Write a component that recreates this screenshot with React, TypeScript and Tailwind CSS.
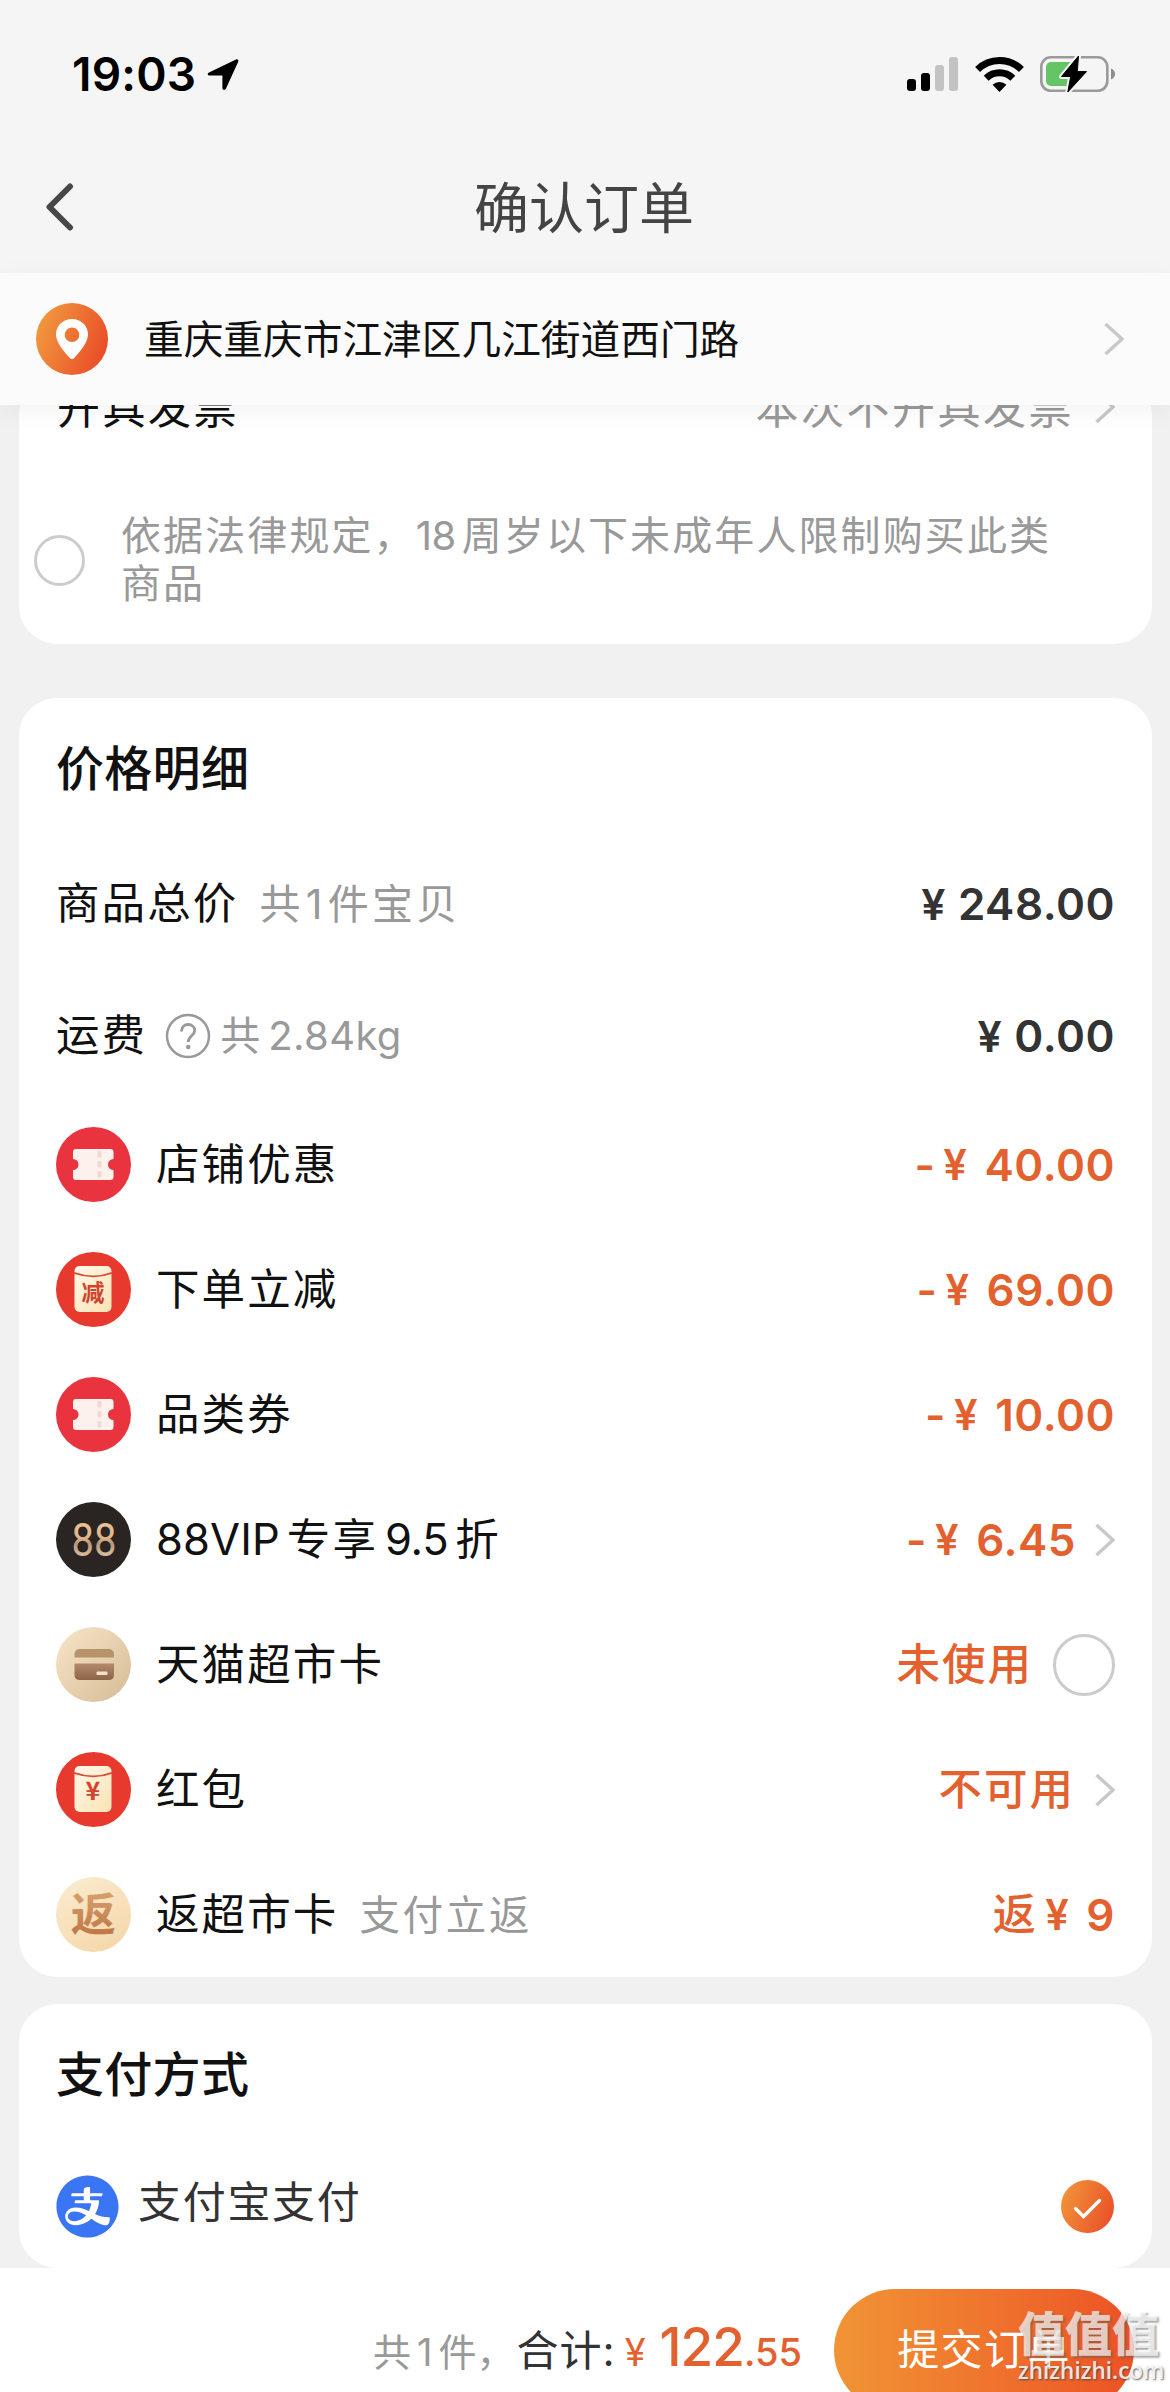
import React from "react";
import { AiFillAlipayCircle } from "react-icons/ai";

const FONT = "font-['Inter','Noto_Sans_CJK_SC',sans-serif]";

function StatusBar() {
  return (
    <div className="flex h-[148px] shrink-0 items-center pl-[72px] pr-[54px]">
      <span className="text-[46px] font-semibold leading-none tracking-[0.200px] text-black">19:03</span>
      <svg className="ml-[11px]" width="32" height="33" viewBox="0 0 32 33">
        <path d="M2 14.5 29 1.5c1.6-.7 2.9.6 2.2 2.2L19 30.500c-.9 2-3.600 1.500-3.600-.6V17.500H2.900C.5 17.500 0 15.400 2 14.500Z" fill="#000" />
      </svg>
      <div className="ml-auto flex items-end gap-[5px]">
        <div className="h-3 w-[9px] rounded-[3px] bg-black" />
        <div className="h-[18px] w-[9px] rounded-[3px] bg-black" />
        <div className="h-[26px] w-[9px] rounded-[3px] bg-[#c3c3c3]" />
        <div className="h-[34px] w-[9px] rounded-[3px] bg-[#c3c3c3]" />
      </div>
      <svg className="ml-[17px]" width="49" height="36" viewBox="0 0 49 36">
        <g fill="none" stroke="#000" strokeWidth="7">
          <path d="M2.600 13.500a31 31 0 0 1 43.800 0" />
          <path d="M11.200 22.200a19 19 0 0 1 26.600 0" />
        </g>
        <path d="M24.500 36 17.600 28.800a10 10 0 0 1 13.800 0Z" fill="#000" />
      </svg>
      <svg className="ml-[16px]" width="76" height="38" viewBox="0 0 76 38">
        <rect x="1.300" y="2.300" width="66" height="33.500" rx="9.500" fill="none" stroke="#9a9a9a" strokeWidth="2.600" />
        <path d="M71 13.500c5.500 2.500 5.500 8.500 0 11Z" fill="#8e8e8e" />
        <rect x="6" y="7" width="30" height="24" rx="5" fill="#65c466" />
        <path d="M38.500 1 21.500 21.500h9.200L27.800 37 46.500 16.600h-9.200Z" fill="#000" stroke="#f5f5f5" strokeWidth="5" strokeLinejoin="round" />
        <path d="M38.500 1 21.500 21.500h9.200L27.800 37 46.500 16.600h-9.200Z" fill="#000" stroke="#000" strokeWidth="1" strokeLinejoin="round" />
      </svg>
    </div>
  );
}

function Chevron({ className = "" }: { className?: string }) {
  return (
    <svg className={`shrink-0 ${className}`} width="20" height="34" viewBox="0 0 20 34">
      <path d="M1.500 2 18 17 1.500 32" fill="none" stroke="#c8c8c8" strokeWidth="3.400" />
    </svg>
  );
}

function NavBar() {
  return (
    <div className="relative flex h-[125px] shrink-0 items-center justify-center pb-[5px]">
      <svg className="absolute left-[45px] top-[35px]" width="30" height="48" viewBox="0 0 30 48">
        <path d="M25 3.500 4.500 24 25 44.500" fill="none" stroke="#474747" strokeWidth="6" strokeLinecap="round" strokeLinejoin="round" />
      </svg>
      <h1 className="pr-[2px] text-[55px] font-normal leading-none text-[#444]">确认订单</h1>
    </div>
  );
}

function AddressBar() {
  return (
    <div className="relative z-10 flex h-[132px] shrink-0 items-center bg-[#fbfbfb] pl-9 pr-[46px] shadow-[0_6px_24px_rgba(0,0,0,0.05)]">
      <svg width="72" height="72" viewBox="0 0 72 72">
        <defs>
          <linearGradient id="pin" x1="0" x2="1" y1="0.300" y2="0.700">
            <stop offset="0" stopColor="#f09a3e" />
            <stop offset="1" stopColor="#ea4a28" />
          </linearGradient>
        </defs>
        <circle cx="36" cy="36" r="36" fill="url(#pin)" />
        <path fillRule="evenodd" d="M36 16c9.200 0 16 6.900 16 15.500 0 7.500-7 16-13.800 23.600a2.900 2.900 0 0 1-4.400 0C27 47.500 20 39 20 31.500 20 22.900 26.800 16 36 16Zm0 8.500a7.300 7.300 0 1 0 0 14.600 7.300 7.300 0 0 0 0-14.600Z" fill="#fff" />
      </svg>
      <span className="ml-[36px] pt-[3px] text-[39.700px] leading-none text-[#111]">重庆重庆市江津区几江街道西门路</span>
      <Chevron className="ml-auto" />
    </div>
  );
}

function InvoiceCard() {
  return (
    <section className="-mt-7 ml-[19px] mr-[18px] h-[267px] shrink-0 overflow-hidden rounded-[38px] bg-white">
      <div className="flex h-[60px] items-center pl-[38px] pr-[37px] text-[43px] leading-none tracking-[2.500px]">
        <span className="pt-[3px] text-[#111]">开具发票</span>
        <span className="ml-auto pt-[3px] text-[#999]">本次不开具发票</span>
        <Chevron className="ml-[21px]" />
      </div>
      <div className="flex h-[207px] items-center pl-[15px] pt-[39px]">
        <div className="size-[51px] shrink-0 rounded-full border-3 border-[#ccc]" />
        <p className="ml-[36px] text-[40px] leading-[48px] tracking-[2.100px] text-[#999]">
          依据法律规定，<span className="mr-[6px] tracking-[-0.500px]">18</span>周岁以下未成年人限制购买此类
          <br />
          商品
        </p>
      </div>
    </section>
  );
}

function Price({ value, prefix, dark }: { value: string; prefix?: string; dark?: boolean }) {
  return (
    <span className={`flex items-center text-[44px] font-semibold leading-none tracking-[0.500px] ${dark ? "text-[#333]" : "text-[#e3612f]"}`}>
      {prefix === "-" && <span className="mr-[8px]">-</span>}
      {prefix && prefix !== "-" && <span className="mr-[9px] text-[43px] font-medium">{prefix}</span>}
      <span className={dark ? "mr-[12px] text-[43px]" : "mr-[17px] text-[42px]"}>¥</span>
      <span>{value}</span>
    </span>
  );
}

function TicketIcon() {
  return (
    <svg width="75" height="75" viewBox="0 0 75 75">
      <circle cx="37.500" cy="37.500" r="37.500" fill="#e93440" />
      <path d="M20 22h34.500q3 0 3 3v7a5.500 5.500 0 0 0 0 11v7q0 3-3 3H20q-3 0-3-3v-7a5.500 5.500 0 0 0 0-11v-7q0-3 3-3Z" fill="#fdf1ed" />
      <g fill="#f2d8d3">
        <rect x="41.500" y="24" width="4" height="6.500" rx="1" />
        <rect x="41.500" y="34" width="4" height="6.500" rx="1" />
        <rect x="41.500" y="44" width="4" height="6.500" rx="1" />
      </g>
    </svg>
  );
}

function EnvelopeIcon({ mark, id }: { mark: string; id: string }) {
  return (
    <svg width="75" height="75" viewBox="0 0 75 75">
      <defs>
        <linearGradient id={id} x1="0" x2="1" y1="0" y2="1">
          <stop offset="0" stopColor="#fff8ea" />
          <stop offset="1" stopColor="#fbe3b4" />
        </linearGradient>
      </defs>
      <circle cx="37.500" cy="37.500" r="37.500" fill="#e7392e" />
      <rect x="18.500" y="14" width="37" height="46" rx="5" fill={`url(#${id})`} />
      <path d="M18 20.800q19.500 7 38 0" fill="none" stroke="#e0493a" strokeWidth="1.800" />
      <text x="37" y={mark === "减" ? 48.500 : 47.500} textAnchor="middle" fontSize={mark === "减" ? 23 : 25} fontWeight="700" fill="#d2442f" fontFamily="'Noto Sans CJK SC', sans-serif">
        {mark}
      </text>
    </svg>
  );
}

function VipIcon() {
  return (
    <svg width="75" height="75" viewBox="0 0 75 75">
      <defs>
        <linearGradient id="vip" x1="0" x2="0" y1="0" y2="1">
          <stop offset="0" stopColor="#f0cba0" />
          <stop offset="0.480" stopColor="#e0b486" />
          <stop offset="0.580" stopColor="#b59676" />
          <stop offset="1" stopColor="#f6dfbe" />
        </linearGradient>
      </defs>
      <circle cx="37.500" cy="37.500" r="37.500" fill="#2a2422" />
      <text x="15.500" y="53.500" fontSize="47" fontFamily="Roboto, sans-serif" fontWeight="400" textLength="45" lengthAdjust="spacingAndGlyphs" fill="url(#vip)">
        88
      </text>
    </svg>
  );
}

function CardIcon() {
  return (
    <svg width="75" height="75" viewBox="0 0 75 75">
      <defs>
        <linearGradient id="cardBg" x1="0" x2="1" y1="0" y2="1">
          <stop offset="0" stopColor="#f7e6c8" />
          <stop offset="1" stopColor="#d6bb96" />
        </linearGradient>
        <linearGradient id="cardLow" x1="0" x2="0" y1="0" y2="1">
          <stop offset="0" stopColor="#b38a6a" />
          <stop offset="1" stopColor="#8d6449" />
        </linearGradient>
      </defs>
      <circle cx="37.500" cy="37.500" r="37.500" fill="url(#cardBg)" />
      <path d="M18.500 30.500v-3q0-5.500 5.500-5.500h28.500q5.500 0 5.500 5.500v3Z" fill="#b5946c" />
      <path d="M18.500 36.500H58v11q0 5.500-5.500 5.500H24q-5.500 0-5.500-5.500Z" fill="url(#cardLow)" />
      <rect x="40.500" y="44.500" width="11" height="3.600" rx="1" fill="#f3e2c9" />
    </svg>
  );
}

function RebateIcon() {
  return (
    <svg width="75" height="75" viewBox="0 0 75 75">
      <defs>
        <linearGradient id="rebBg" x1="0" x2="0.600" y1="0" y2="1">
          <stop offset="0" stopColor="#fbecd2" />
          <stop offset="1" stopColor="#f5d9ac" />
        </linearGradient>
        <linearGradient id="rebText" x1="0" x2="0" y1="0" y2="1">
          <stop offset="0" stopColor="#deab78" />
          <stop offset="1" stopColor="#b9703f" />
        </linearGradient>
      </defs>
      <circle cx="37.500" cy="37.500" r="37.500" fill="url(#rebBg)" />
      <text x="37.200" y="53.800" textAnchor="middle" fontSize="45" fontWeight="700" fill="url(#rebText)" fontFamily="'Noto Sans CJK SC', sans-serif">
        返
      </text>
    </svg>
  );
}

function IconRow({ icon, label, children }: { icon: React.ReactNode; label: React.ReactNode; children: React.ReactNode }) {
  return (
    <div className="flex h-[125px] items-center">
      {icon}
      <span className="ml-[25px] text-[43.500px] leading-none tracking-[2.100px] text-[#111]">{label}</span>
      <div className="ml-auto flex items-center">{children}</div>
    </div>
  );
}

function Status({ children }: { children: string }) {
  return <span className="text-[43.500px] font-medium leading-none tracking-[2px] text-[#e3612f]">{children}</span>;
}

function PriceCard() {
  return (
    <section className="ml-[19px] mr-[18px] mt-[54px] h-[1279px] shrink-0 rounded-[38px] bg-white pl-[37px] pr-[37px]">
      <h2 className="flex h-[140px] items-center pt-[2px] text-[48px] font-medium leading-none tracking-[0.300px] text-[#111]">价格明细</h2>
      <div className="flex h-[130px] items-center pt-[2px]">
        <span className="text-[43.500px] leading-none tracking-[2.100px] text-[#111]">商品总价</span>
        <span className="ml-[21px] text-[41px] leading-none tracking-[3.300px] text-[#999]">
          共<span className="mx-[2px]">1</span>件宝贝
        </span>
        <div className="ml-auto">
          <Price value="248.00" dark />
        </div>
      </div>
      <div className="flex h-[134px] items-center pt-[2px]">
        <span className="text-[43.500px] leading-none tracking-[2.100px] text-[#111]">运费</span>
        <svg className="ml-[18px]" width="46" height="46" viewBox="0 0 46 46">
          <circle cx="23" cy="23" r="21" fill="none" stroke="#999" strokeWidth="2.500" />
          <path d="M16.500 18.500c0-4.500 3-7 6.700-7s6.500 2.500 6.500 6c0 5-6.500 5.500-6.500 11.500" fill="none" stroke="#999" strokeWidth="2.800" />
          <circle cx="23.200" cy="34" r="2.300" fill="#999" />
        </svg>
        <span className="ml-[9px] text-[40px] leading-none text-[#999]">
          共<span className="ml-[8px] tracking-[0.400px]">2.84kg</span>
        </span>
        <div className="ml-auto">
          <Price value="0.00" dark />
        </div>
      </div>
      <IconRow icon={<TicketIcon />} label="店铺优惠">
        <Price prefix="-" value="40.00" />
      </IconRow>
      <IconRow icon={<EnvelopeIcon mark="减" id="envCut" />} label="下单立减">
        <Price prefix="-" value="69.00" />
      </IconRow>
      <IconRow icon={<TicketIcon />} label="品类券">
        <Price prefix="-" value="10.00" />
      </IconRow>
      <IconRow
        icon={<VipIcon />}
        label={
          <>
            <span className="tracking-[0.100px]">88VIP</span>
            <span className="ml-[7px]">专享</span>
            <span className="ml-[7px] tracking-[-0.300px]">9.5</span>
            <span className="ml-[7px]">折</span>
          </>
        }
      >
        <Price prefix="-" value="6.45" />
        <Chevron className="ml-[19px]" />
      </IconRow>
      <IconRow icon={<CardIcon />} label="天猫超市卡">
        <Status>未使用</Status>
        <div className="ml-[20px] size-[62px] rounded-full border-3 border-[#ccc]" />
      </IconRow>
      <IconRow icon={<EnvelopeIcon mark="¥" id="envYuan" />} label="红包">
        <Status>不可用</Status>
        <Chevron className="ml-[20px]" />
      </IconRow>
      <IconRow
        icon={<RebateIcon />}
        label={
          <>
            返超市卡<span className="ml-[21px] text-[40.500px] tracking-[2.700px] text-[#999]">支付立返</span>
          </>
        }
      >
        <Price prefix="返" value="9" />
      </IconRow>
    </section>
  );
}

function PaymentCard() {
  return (
    <section className="ml-[19px] mr-[18px] mt-[27px] h-[264px] shrink-0 rounded-[38px] bg-white pl-[37px] pr-[38px]">
      <h2 className="flex h-[140px] items-center pt-[2px] text-[48px] font-medium leading-none tracking-[0.300px] text-[#111]">支付方式</h2>
      <div className="flex h-[124px] items-center">
        <AiFillAlipayCircle className="-m-[4.500px] size-[71px] text-[#3a75f3]" />
        <span className="mb-[8px] ml-[20px] text-[43px] leading-none tracking-[1.700px] text-[#333]">支付宝支付</span>
        <svg className="ml-auto" width="53" height="53" viewBox="0 0 53 53">
          <defs>
            <linearGradient id="tick" x1="0" x2="1" y1="0.300" y2="0.700">
              <stop offset="0" stopColor="#f0933a" />
              <stop offset="1" stopColor="#ea5028" />
            </linearGradient>
          </defs>
          <circle cx="26.500" cy="26.500" r="26.500" fill="url(#tick)" />
          <path d="M14.500 28.500 22.500 36.500 38.500 20.500" fill="none" stroke="#fff" strokeWidth="3.400" strokeLinecap="round" />
        </svg>
      </div>
    </section>
  );
}

function Footer() {
  return (
    <footer className="relative flex h-[124px] shrink-0 items-start justify-end bg-white pr-[36px] pt-[21px]">
      <div className="flex h-[122px] items-baseline pt-[32px] leading-none">
        <span className="text-[38px] text-[#999]">
          共<span className="mx-[6px]">1</span>件，
        </span>
        <span className="ml-[2px] text-[42px] tracking-[1px] text-[#333]">合计:</span>
        <span className="ml-[9px] text-[38px] text-[#e3612f]">¥</span>
        <span className="ml-[14px] text-[53px] font-medium tracking-[-1px] text-[#e3612f]">122</span>
        <span className="text-[38px] font-medium text-[#e3612f]">.55</span>
      </div>
      <button className="ml-[32px] flex h-[122px] w-[300px] items-center justify-center rounded-full bg-linear-to-r from-[#f09435] to-[#ec5125] text-[42px] leading-none tracking-[1.400px] text-white">
        提交订单
      </button>
      <div className="absolute left-[1018px] top-[41px] flex flex-col text-white/70">
        <span className="text-[47px] font-black leading-[50px] [text-shadow:2px_2px_2px_rgba(90,90,90,0.5)]">值值值</span>
        <span className="font-['Open_Sans'] text-[22.500px] font-semibold leading-[24px] text-white/85 [text-shadow:1px_1px_2px_rgba(60,60,60,0.8)]">zhizhizhi.com</span>
      </div>
    </footer>
  );
}

export default function App() {
  return (
    <div className={`flex h-[2392px] w-[1170px] flex-col overflow-hidden bg-[#f1f1f1] ${FONT}`}>
      <header className="flex shrink-0 flex-col bg-[#f5f5f5]">
        <StatusBar />
        <NavBar />
      </header>
      <AddressBar />
      <InvoiceCard />
      <PriceCard />
      <PaymentCard />
      <Footer />
    </div>
  );
}
